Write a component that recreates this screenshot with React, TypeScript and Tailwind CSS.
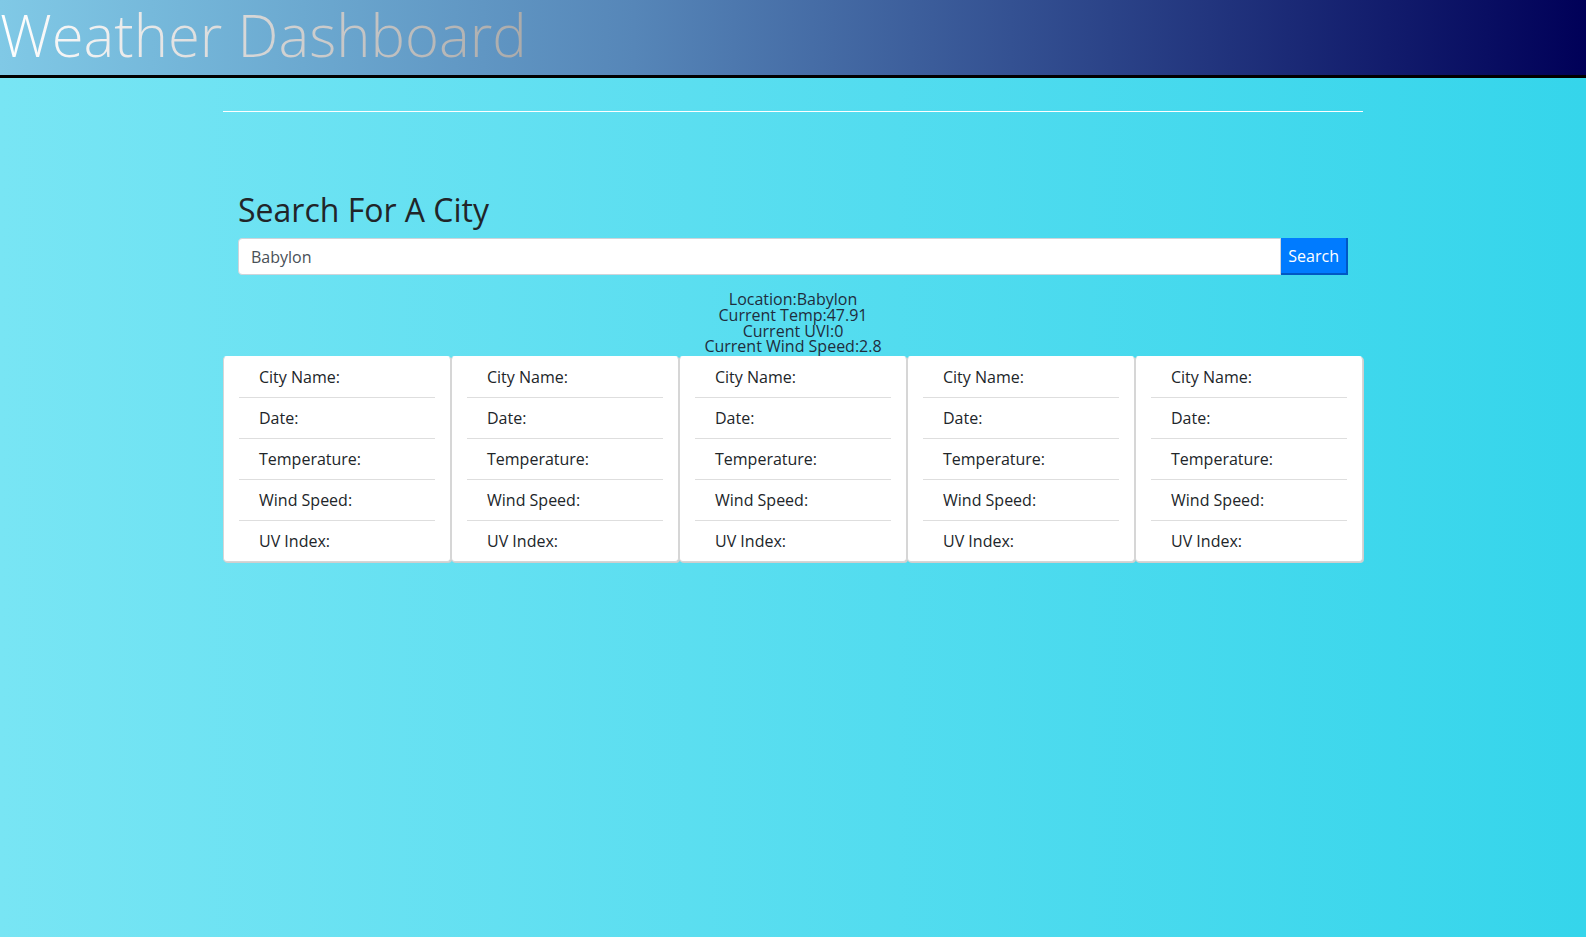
import React from "react"

const forecastFields = ["City Name:", "Date:", "Temperature:", "Wind Speed:", "UV Index:"]

export default function App() {
  const current = {
    location: "Babylon",
    temp: "47.91",
    uvi: "0",
    wind: "2.8",
  }

  return (
    <div className="min-h-screen w-full bg-[linear-gradient(to_right,#78e5f4,#35d5eb)] font-['Open_Sans',sans-serif] text-[#212529]">
      {/* header */}
      <header className="h-[78px] border-b-[3px] border-black bg-[linear-gradient(to_right,#80c9e6,#5686b8_40%,#000058)]">
        <h1 className="text-[58px] leading-[70px] font-light">
          <span className="inline-block bg-[linear-gradient(to_right,#ffffff,#aaaaaa)] bg-clip-text text-transparent">
            Weather Dashboard
          </span>
        </h1>
      </header>

      <div className="mx-auto w-[1140px]">
        <hr className="mt-[33px] border-0 border-t border-white" />

        {/* search */}
        <div className="px-[15px]">
          <h2 className="mt-[79px] mb-[9px] text-[32px] leading-[38px] font-normal">Search For A City</h2>
          <div className="flex h-[37px]">
            <input
              className="flex-1 rounded-l-[4px] border border-[#ced4da] bg-white px-3 text-[16px] text-[#495057] outline-none"
              defaultValue="Babylon"
            />
            <button className="border-r-2 border-b-2 border-[#0058c4] bg-[#007bff] px-[7px] text-[16px] text-white">
              Search
            </button>
          </div>
        </div>

        {/* current conditions */}
        <div className="mt-[17px] text-center text-[16px] leading-[15.8px] text-[#1f2d3d]">
          <p>Location:{current.location}</p>
          <p>Current Temp:{current.temp}</p>
          <p>Current UVI:{current.uvi}</p>
          <p>Current Wind Speed:{current.wind}</p>
        </div>

        {/* five day cards */}
        <div className="mt-[1px] grid grid-cols-5">
          {[0, 1, 2, 3, 4].map((i) => (
            <div
              key={i}
              className="rounded-[4px] border border-[#d6d6d6] border-t-white bg-white px-[15px] shadow-[1px_1px_0_#cfcfcf]"
            >
              <ul>
                {forecastFields.map((f, j) => (
                  <li
                    key={f}
                    className={`py-2 pl-5 text-[16px] leading-6 ${j < forecastFields.length - 1 ? "border-b border-[#dedede]" : ""}`}
                  >
                    {f}
                  </li>
                ))}
              </ul>
            </div>
          ))}
        </div>
      </div>
    </div>
  )
}
